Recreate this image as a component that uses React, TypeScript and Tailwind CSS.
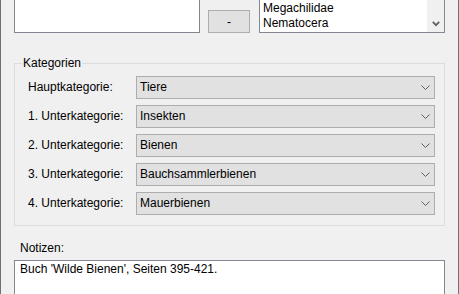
const kategorien = [
  { label: 'Hauptkategorie:', value: 'Tiere' },
  { label: '1. Unterkategorie:', value: 'Insekten' },
  { label: '2. Unterkategorie:', value: 'Bienen' },
  { label: '3. Unterkategorie:', value: 'Bauchsammlerbienen' },
  { label: '4. Unterkategorie:', value: 'Mauerbienen' },
]

function ComboChevron() {
  return (
    <svg width="9" height="5" viewBox="0 0 9 5" className="shrink-0">
      <polyline points="0.5,0.5 4.5,4.5 8.5,0.5" fill="none" stroke="#606060" strokeWidth="1" />
    </svg>
  )
}

function ComboBox({ value }: { value: string }) {
  return (
    <div className="w-[299px] h-[23px] bg-[#e1e1e1] border border-[#adadad] flex items-center pl-[3px] pr-[4px]">
      <span className="flex-1 leading-[15px]">{value}</span>
      <ComboChevron />
    </div>
  )
}

export default function App() {
  return (
    <div className="w-[459px] h-[294px] overflow-hidden bg-[#f0f0f0] border-l border-r border-[#707070] px-[13px] text-[12px] text-black font-['Liberation_Sans',Arial,sans-serif]">
      {/* Listen oben */}
      <div className="flex items-end h-[33px]">
        <div className="w-[186px] h-[33px] bg-white border border-t-0 border-[#828790]" />
        <button
          type="button"
          className="ml-[8px] w-[42px] h-[23px] bg-[#e1e1e1] border border-[#adadad] flex items-center justify-center leading-none"
        >
          -
        </button>
        <div className="ml-[9px] w-[186px] h-[33px] bg-white border border-t-0 border-[#828790] flex">
          <div className="flex-1 pl-[3px]">
            <div className="leading-[16px]">Megachilidae</div>
            <div className="leading-[15px]">Nematocera</div>
          </div>
          <div className="w-[17px] bg-[#f0f0f0] flex flex-col justify-end">
            <div className="h-[17px] flex items-center justify-center">
              <svg width="8" height="6" viewBox="0 0 8 6">
                <polyline points="0.8,0.8 4,4.2 7.2,0.8" fill="none" stroke="#606060" strokeWidth="1.8" />
              </svg>
            </div>
          </div>
        </div>
      </div>

      {/* Kategorien */}
      <fieldset className="mt-[22px] border border-[#dcdcdc] p-0 m-0 min-w-0">
        <legend className="ml-[7px] px-[1px] h-[16px] leading-[16px]">Kategorien</legend>
        <div className="flex flex-col gap-[6px] pt-[5px] pb-[10px] pl-[13px]">
          {kategorien.map((k) => (
            <div key={k.label} className="flex items-center h-[23px]">
              <span className="w-[108px] leading-[15px]">{k.label}</span>
              <ComboBox value={k.value} />
            </div>
          ))}
        </div>
      </fieldset>

      {/* Notizen */}
      <div className="mt-[15px] ml-[6px] leading-[15px]">Notizen:</div>
      <div className="mt-[4px] h-[40px] bg-white border border-[#828790] pl-[5px] pt-[1px] leading-[15px]">
        Buch 'Wilde Bienen', Seiten 395-421.
      </div>
    </div>
  )
}
